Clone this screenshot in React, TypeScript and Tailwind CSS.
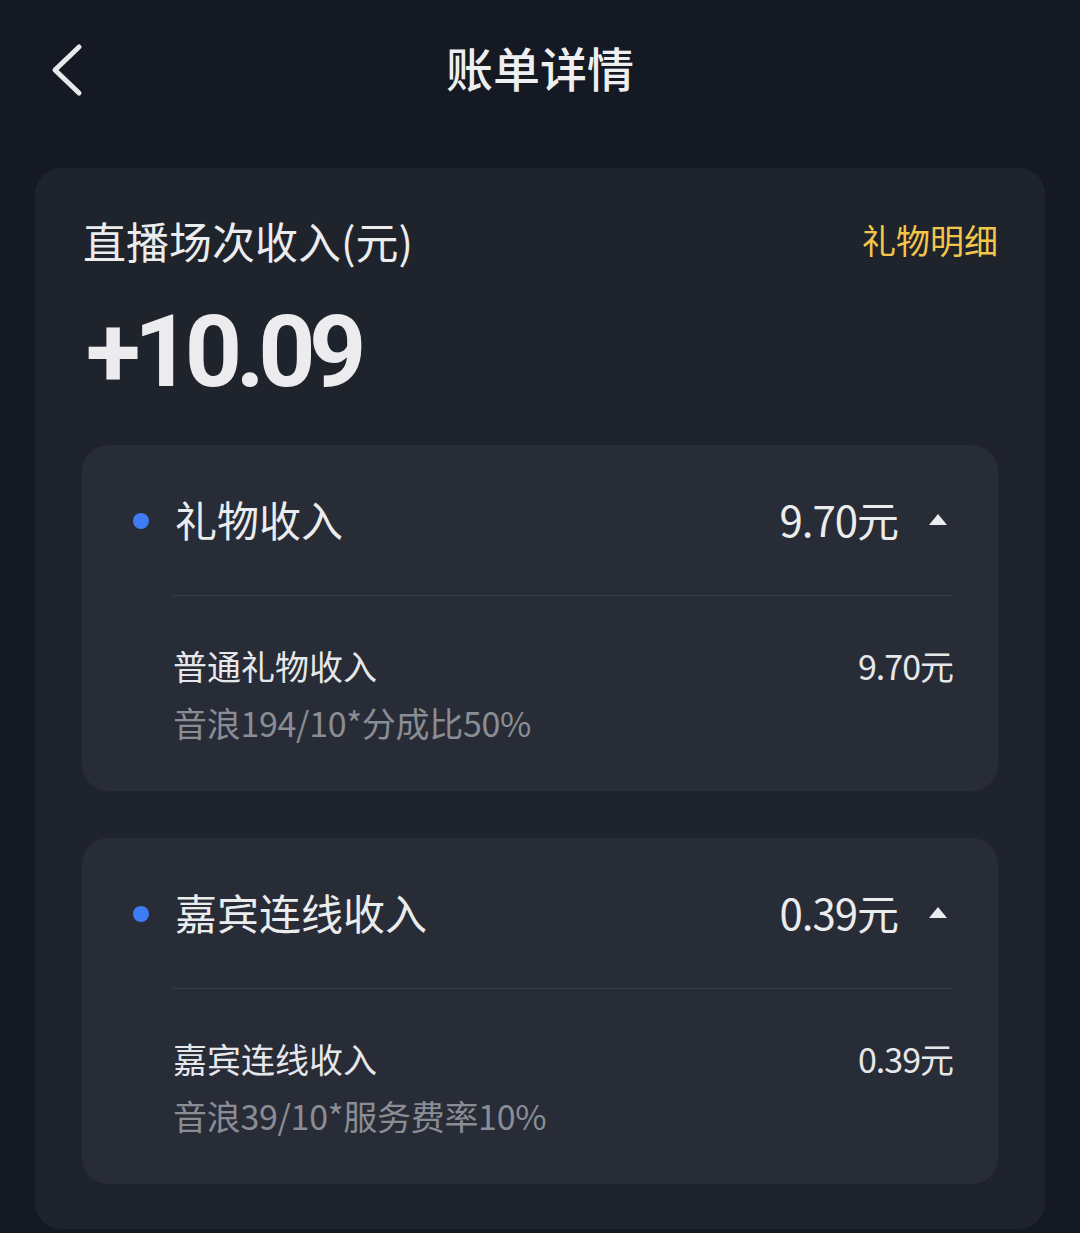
import React from 'react'

const font = { fontFamily: '"Noto Sans CJK SC", "Noto Sans", sans-serif' }

type Item = {
    title: string
    amount: string
    subTitle: string
    subAmount: string
    desc: string
}

const items: Item[] = [
    {
        title: '礼物收入',
        amount: '9.70元',
        subTitle: '普通礼物收入',
        subAmount: '9.70元',
        desc: '音浪194/10*分成比50%',
    },
    {
        title: '嘉宾连线收入',
        amount: '0.39元',
        subTitle: '嘉宾连线收入',
        subAmount: '0.39元',
        desc: '音浪39/10*服务费率10%',
    },
]

const IncomeCard = ({ item }: { item: Item }) => {
    return (
        <div className="bg-[#282c36] rounded-[26px] pl-[91px] pr-[45px] pt-[46px] pb-[45px]">
            <div className="flex items-center h-[56px]">
                <span className="ml-[-40px] mr-[26px] mt-[4px] w-4 h-4 rounded-full bg-[#3d7cf4] shrink-0" />
                <span className="text-[42px] leading-[56px] text-[#ebecee]">{item.title}</span>
                <span className="ml-auto text-[42px] leading-[56px] text-[#ebecee] tracking-[-1px]">
                    {item.amount}
                </span>
                <svg width="20" height="13" viewBox="0 0 20 13" className="ml-[30px] mr-[5px]">
                    <path d="M10 1 L19 12 L1 12 Z" fill="#ebecee" />
                </svg>
            </div>
            <div className="h-[1px] bg-[#383c46] mt-[48px]" />
            <div className="flex items-center mt-[47px] h-[46px]">
                <span className="text-[34px] leading-[46px] text-[#e6e7ea]">{item.subTitle}</span>
                <span className="ml-auto text-[34px] leading-[46px] text-[#e6e7ea] tracking-[-1px]">
                    {item.subAmount}
                </span>
            </div>
            <div className="mt-[11px] text-[34px] leading-[46px] text-[#8a8d94] tracking-[-0.3px]">
                {item.desc}
            </div>
        </div>
    )
}

export default function App() {
    return (
        <div style={font} className="w-[1080px] min-h-[1233px] bg-[#151923] pb-[5px]">
            <div className="relative h-[140px] flex items-center justify-center">
                <svg
                    width="40"
                    height="56"
                    viewBox="0 0 40 56"
                    className="absolute left-[46px] top-[42px]"
                >
                    <path
                        d="M33 5 L9 28 L33 51"
                        fill="none"
                        stroke="#e8e9eb"
                        strokeWidth="5"
                        strokeLinecap="round"
                        strokeLinejoin="round"
                    />
                </svg>
                <h1 className="text-[47px] font-medium text-[#eeeff1] leading-[60px] mb-[6px]">账单详情</h1>
            </div>

            <div className="mx-[35px] mt-[28px] bg-[#1f232c] rounded-[26px] px-[47px] pt-[48px] pb-[45px]">
                <div className="flex items-center h-[48px]">
                    <span className="text-[43px] leading-[48px] text-[#ebecee] ml-[1px]">直播场次收入(元)</span>
                    <span className="ml-auto text-[34px] leading-[48px] text-[#f3c64b]">礼物明细</span>
                </div>
                <div className="mt-[36px] h-[100px] flex items-center">
                    <span
                        className="text-[100px] leading-[100px] font-bold text-[#ececee] tracking-[-6.5px] ml-[4px] mt-[4px]"
                        style={{ fontFamily: 'Roboto, "Noto Sans", sans-serif' }}
                    >
                        +10.09
                    </span>
                </div>
                <div className="mt-[45px] flex flex-col gap-[47px]">
                    {items.map((item) => (
                        <IncomeCard key={item.title} item={item} />
                    ))}
                </div>
            </div>
        </div>
    )
}
